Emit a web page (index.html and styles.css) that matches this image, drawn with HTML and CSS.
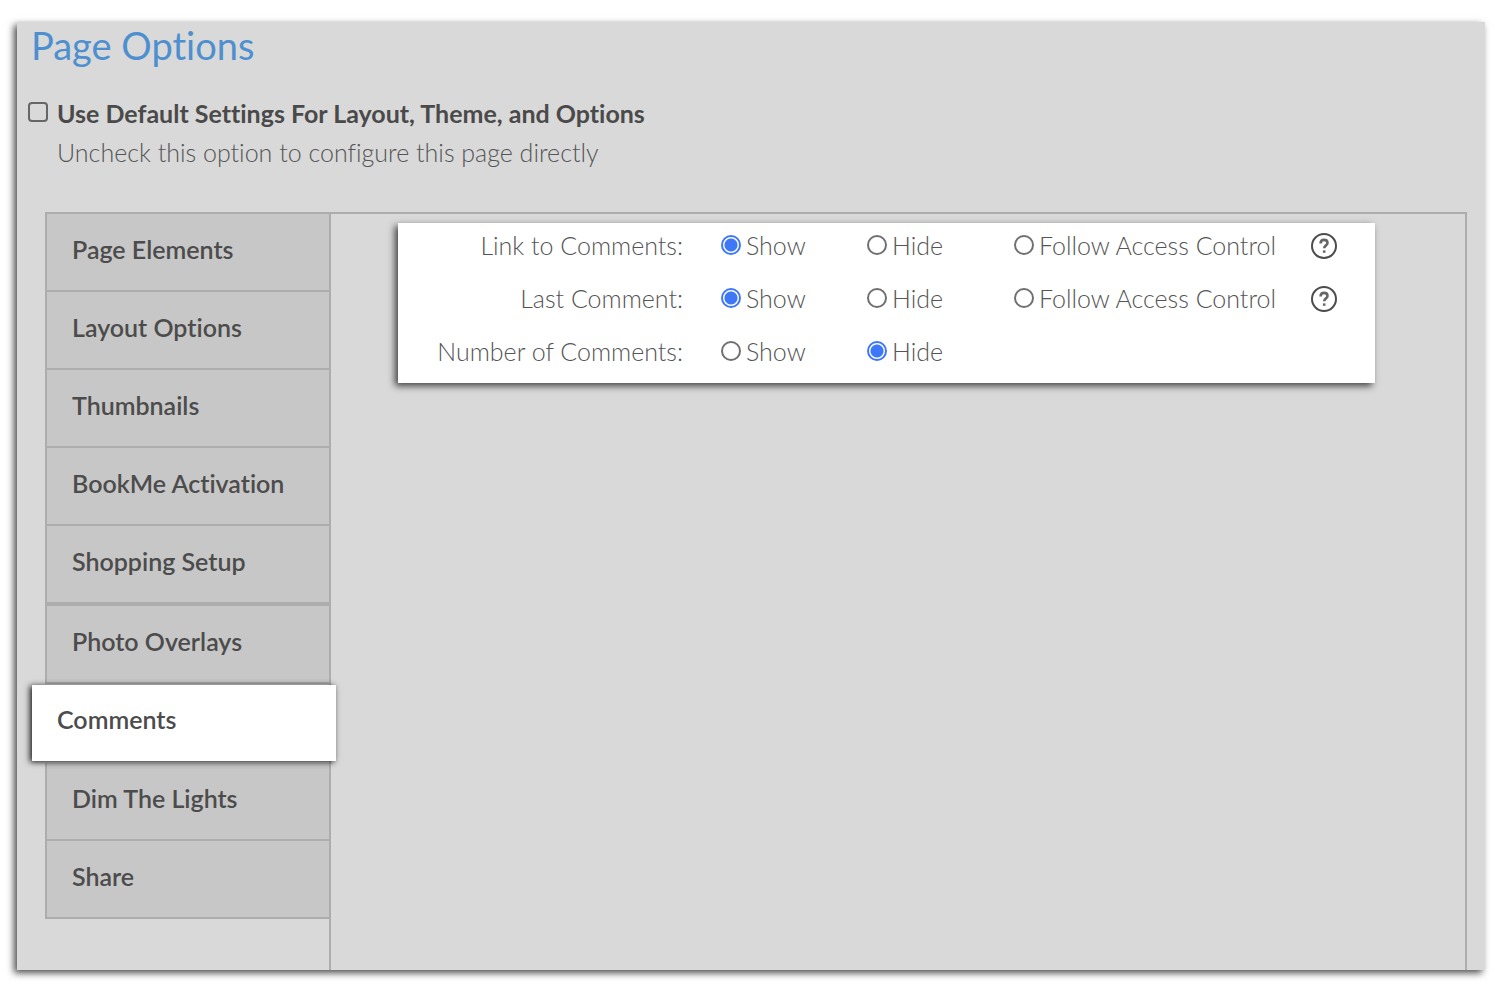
FILE: index.html
```
<!DOCTYPE html>
<html lang="en">
<head>
<meta charset="utf-8">
<meta name="viewport" content="width=device-width, initial-scale=1">
<title>Page Options</title>
<link rel="stylesheet" href="styles.css">
</head>
<body>
<main class="panel">
  <h1 class="panel-title">Page Options</h1>
  <div class="default-setting">
    <input class="checkbox" type="checkbox" id="use-default" aria-describedby="default-hint">
    <div class="default-copy">
      <label class="default-label" for="use-default">Use Default Settings For Layout, Theme, and Options</label>
      <p class="default-hint" id="default-hint">Uncheck this option to configure this page directly</p>
    </div>
  </div>
  <div class="options">
    <nav class="tabs" aria-label="Page options">
      <button class="tab" type="button">Page Elements</button>
      <button class="tab" type="button">Layout Options</button>
      <button class="tab" type="button">Thumbnails</button>
      <button class="tab" type="button">BookMe Activation</button>
      <button class="tab tab-group-end" type="button">Shopping Setup</button>
      <button class="tab" type="button">Photo Overlays</button>
      <button class="tab tab-active" type="button" aria-current="page">Comments</button>
      <button class="tab" type="button">Dim The Lights</button>
      <button class="tab" type="button">Share</button>
    </nav>
    <section class="content">
      <form class="settings">
        <div class="setting" role="radiogroup" aria-labelledby="link-label">
          <span class="setting-label" id="link-label">Link to Comments:</span>
          <label class="choice"><input class="radio" type="radio" name="link" checked>Show</label>
          <label class="choice"><input class="radio" type="radio" name="link">Hide</label>
          <label class="choice"><input class="radio" type="radio" name="link">Follow Access Control</label>
          <button class="help" type="button" aria-label="Help with link to comments">
            <svg class="help-icon" viewBox="0 0 26 26" aria-hidden="true"><circle cx="13" cy="13" r="12"/><path class="help-mark" d="M9.6 10.4C9.6 8.1 11 6.9 13.1 6.9C15.2 6.9 16.5 8.1 16.5 9.9C16.5 12.4 13.2 12.4 13.2 15.3"/><path class="help-mark" d="M13.2 17.4V19.8"/></svg>
          </button>
        </div>
        <div class="setting" role="radiogroup" aria-labelledby="last-label">
          <span class="setting-label" id="last-label">Last Comment:</span>
          <label class="choice"><input class="radio" type="radio" name="last" checked>Show</label>
          <label class="choice"><input class="radio" type="radio" name="last">Hide</label>
          <label class="choice"><input class="radio" type="radio" name="last">Follow Access Control</label>
          <button class="help" type="button" aria-label="Help with last comment">
            <svg class="help-icon" viewBox="0 0 26 26" aria-hidden="true"><circle cx="13" cy="13" r="12"/><path class="help-mark" d="M9.6 10.4C9.6 8.1 11 6.9 13.1 6.9C15.2 6.9 16.5 8.1 16.5 9.9C16.5 12.4 13.2 12.4 13.2 15.3"/><path class="help-mark" d="M13.2 17.4V19.8"/></svg>
          </button>
        </div>
        <div class="setting" role="radiogroup" aria-labelledby="number-label">
          <span class="setting-label" id="number-label">Number of Comments:</span>
          <label class="choice"><input class="radio" type="radio" name="number">Show</label>
          <label class="choice"><input class="radio" type="radio" name="number" checked>Hide</label>
        </div>
      </form>
    </section>
  </div>
</main>
</body>
</html>
```

FILE: styles.css
```
* {
  box-sizing: border-box;
}

body {
  margin: 0;
  padding: 22px 17px 25px;
  min-height: 100vh;
  display: flex;
  background: #fff;
  color: #505050;
  font-family: Lato, "Open Sans", sans-serif;
  font-size: 25px;
  font-variant-ligatures: none;
  line-height: 32px;
}

.panel {
  flex: 1;
  display: flex;
  flex-direction: column;
  background: #d9d9d9;
  box-shadow: -3px 3px 7px rgba(0, 0, 0, 0.7);
}

.panel-title {
  margin: 0;
  padding: 0 14px;
  color: #4e90cf;
  font-size: 38px;
  font-weight: 400;
  line-height: 46px;
}

.default-setting {
  display: flex;
  gap: 9px;
  margin-top: 29px;
  padding: 0 11px;
}

.checkbox {
  appearance: none;
  flex: none;
  width: 20px;
  height: 20px;
  margin: 5px 0 0;
  border: 2px solid #666;
  border-radius: 4px;
}

.checkbox:checked {
  background: #3f78f7;
}

.default-label {
  display: block;
  color: #4a4a4a;
  font-weight: 700;
}

.default-hint {
  margin: 7px 0 0;
  color: #555;
  font-weight: 300;
}

.options {
  flex: 1;
  display: grid;
  grid-template-columns: 284px 1fr;
  margin: 44px 18px 0 28px;
  border-top: 2px solid #adadad;
}

.tabs {
  display: flex;
  flex-direction: column;
}

.tab {
  height: 78px;
  padding: 0 25px 6px;
  border: solid #adadad;
  border-width: 0 0 2px 2px;
  background: #c7c7c7;
  color: #4c4c4c;
  font: inherit;
  font-variant-ligatures: none;
  font-weight: 600;
  text-align: left;
  cursor: pointer;
}

.tab-group-end {
  height: 80px;
  border-bottom-width: 4px;
}

.tab-active {
  z-index: 1;
  height: 76px;
  margin: 1px -7px 2px -13px;
  padding-bottom: 8px;
  border: 0;
  background: #fff;
  box-shadow: -2px 1px 6px rgba(0, 0, 0, 0.9);
}

.content {
  padding: 9px 90px 40px 67px;
  border: solid #adadad;
  border-width: 0 2px;
}

.settings {
  padding-bottom: 1px;
  background: #fff;
  box-shadow: -3px 3px 7px rgba(0, 0, 0, 0.7);
}

.setting {
  display: grid;
  grid-template-columns: 285px 108px 109px 259px 26px;
  align-items: center;
  gap: 38px;
  height: 53px;
  padding-bottom: 10px;
  color: #555;
  font-weight: 300;
}

.setting-label {
  text-align: right;
}

.choice {
  display: flex;
  align-items: center;
  gap: 5px;
  white-space: nowrap;
}

.radio {
  appearance: none;
  flex: none;
  width: 20px;
  height: 20px;
  margin: 0;
  border: 2px solid #707070;
  border-radius: 50%;
  background: #fff;
}

.radio:checked {
  border-color: #3f78f7;
  background: radial-gradient(circle, #3f78f7 6px, #fff 7px);
}

.help {
  width: 26px;
  height: 26px;
  margin-top: 2px;
  padding: 0;
  border: 0;
  background: none;
  cursor: pointer;
}

.help-icon {
  display: block;
  width: 26px;
  height: 26px;
  fill: none;
  stroke: #4c4c4c;
  stroke-width: 2;
}

.help-mark {
  stroke: #666;
  stroke-width: 2.6;
}
```
